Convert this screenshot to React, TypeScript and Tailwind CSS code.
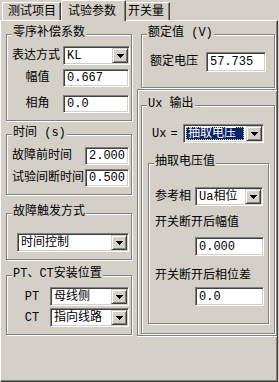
import type { ReactNode } from 'react';

const font = "font-['Liberation_Mono','Noto_Sans_CJK_SC',monospace]";

function Group({ title, className = '', children }: { title: string; className?: string; children?: ReactNode }) {
    return (
        <div className={`relative shrink-0 border border-[#808080] shadow-[inset_1px_1px_0_#fff,1px_1px_0_#fff] ${className}`}>
            <span className="absolute -top-[9px] left-[5px] bg-[#d4d0c8] px-[1px] leading-[14px] whitespace-nowrap">
                {title}
            </span>
            {children}
        </div>
    );
}

function Field({ value, className = '' }: { value: string; className?: string }) {
    return (
        <div className={`shrink-0 border border-t-[#808080] border-l-[#808080] border-b-white border-r-white bg-white shadow-[inset_1px_1px_0_#404040,inset_-1px_-1px_0_#d4d0c8] pl-[3px] flex items-center whitespace-nowrap ${className}`}>
            {value}
        </div>
    );
}

function Select({ value, className = '', focused = false }: { value: string; className?: string; focused?: boolean }) {
    return (
        <div className={`shrink-0 flex h-[19px] border border-t-[#808080] border-l-[#808080] border-b-white border-r-white bg-white shadow-[inset_1px_1px_0_#404040,inset_-1px_-1px_0_#d4d0c8] p-[1px] ${className}`}>
            <div className="flex-1 min-w-0 flex">
                {focused ? (
                    <div className="flex-1 m-[1px] mr-[2px] flex items-center bg-[#0a246a] text-white border border-dotted border-[#d8d080] pl-[1px] whitespace-nowrap">
                        {value}
                    </div>
                ) : (
                    <div className="flex-1 flex items-center pl-[2px] whitespace-nowrap">{value}</div>
                )}
            </div>
            <div className="w-[16px] h-full flex items-center justify-center bg-[#d4d0c8] border border-t-[#d4d0c8] border-l-[#d4d0c8] border-b-[#404040] border-r-[#404040] shadow-[inset_1px_1px_0_#fff,inset_-1px_-1px_0_#808080]">
                <svg width="7" height="4" viewBox="0 0 7 4" shapeRendering="crispEdges">
                    <path d="M0 0h7v1h-1v1h-1v1h-1v1h-1v-1h-1v-1h-1v-1h-1z" fill="#000" />
                </svg>
            </div>
        </div>
    );
}

export default function App() {
    return (
        <div className={`w-[279px] h-[382px] bg-[#d4d0c8] text-[12px] leading-[14px] text-black flex flex-col ${font}`}>
            {/* Tabs */}
            <div className="flex items-end h-[20px] pl-[2px] shrink-0">
                <div className="h-[18px] w-[59px] border-t border-l border-r border-t-white border-l-white border-r-[#404040] shadow-[inset_-1px_0_0_#808080] rounded-tl-[2px] pl-[5px] pt-[2px] whitespace-nowrap">
                    测试项目
                </div>
                <div className="relative z-10 -mb-[1px] h-[21px] w-[65px] bg-[#d4d0c8] border-t border-l border-r border-t-white border-l-white border-r-[#404040] shadow-[inset_-1px_0_0_#808080] rounded-tl-[2px] pl-[6px] pt-[4px] whitespace-nowrap">
                    试验参数
                </div>
                <div className="h-[18px] w-[44px] border-t border-r border-t-white border-r-[#404040] shadow-[inset_-1px_0_0_#808080] pl-[2px] pt-[2px] whitespace-nowrap">
                    开关量
                </div>
            </div>

            {/* Panel */}
            <div className="flex items-start w-[278px] h-[362px] border border-t-white border-l-white border-r-[#404040] border-b-[#404040] shadow-[inset_-1px_-1px_0_#808080]">
                {/* Left column */}
                <div className="ml-[5px] mt-[13px] w-[126px] flex flex-col">
                    <Group title="零序补偿系数" className="h-[87px] pt-[11px] pl-[5px]">
                        <div className="flex items-center">
                            <span className="w-[51px]">表达方式</span>
                            <Select value="KL" className="w-[67px]" />
                        </div>
                        <div className="mt-[4px] flex items-center">
                            <span className="w-[51px] text-center">幅值</span>
                            <Field value="0.667" className="w-[66px] h-[18px]" />
                        </div>
                        <div className="mt-[8px] flex items-center">
                            <span className="w-[51px] text-center">相角</span>
                            <Field value="0.0" className="w-[66px] h-[18px]" />
                        </div>
                    </Group>

                    <Group title="时间 (s)" className="mt-[13px] h-[61px] pt-[12px] pl-[5px]">
                        <div className="flex items-center">
                            <span className="w-[73px] whitespace-nowrap">故障前时间</span>
                            <Field value="2.000" className="w-[44px] h-[18px]" />
                        </div>
                        <div className="mt-[4px] flex items-center">
                            <span className="w-[73px] whitespace-nowrap">试验间断时间</span>
                            <Field value="0.500" className="w-[44px] h-[18px]" />
                        </div>
                    </Group>

                    <Group title="故障触发方式" className="mt-[18px] h-[47px] pt-[19px] pl-[10px]">
                        <Select value="时间控制" className="w-[112px]" />
                    </Group>

                    <Group title="PT、CT安装位置" className="mt-[15px] h-[60px] pt-[11px] pl-[13px]">
                        <div className="flex items-center">
                            <span className="w-[24px] text-center">PT</span>
                            <Select value="母线侧" className="ml-[6px] w-[79px]" />
                        </div>
                        <div className="mt-[2px] flex items-center">
                            <span className="w-[24px] text-center">CT</span>
                            <Select value="指向线路" className="ml-[6px] w-[79px]" />
                        </div>
                    </Group>
                </div>

                {/* Right column */}
                <div className="ml-[5px] w-[140px] flex flex-col">
                    <Group title="额定值 (V)" className="ml-[4px] mt-[13px] w-[134px] h-[54px] pt-[17px] pl-[8px]">
                        <div className="flex items-center">
                            <span className="w-[56px]">额定电压</span>
                            <Field value="57.735" className="w-[60px] h-[20px]" />
                        </div>
                    </Group>

                    <div className="mt-[1px] h-[247px] border-l border-t border-b border-[#808080] shadow-[inset_1px_1px_0_#fff,0_1px_0_#fff] flex flex-col">
                        <Group title="Ux 输出" className="ml-[3px] mt-[15px] w-[134px] h-[229px] pt-[18px]">
                            <div className="ml-[10px] flex items-center">
                                <span className="w-[31px] whitespace-nowrap">
                                    Ux<span className="ml-[4px]">=</span>
                                </span>
                                <Select value="抽取电压" focused className="w-[81px]" />
                            </div>
                            <Group title="抽取电压值" className="ml-[6px] mt-[20px] w-[121px] h-[161px] pt-[23px]">
                                <div className="ml-[6px] flex items-center">
                                    <span className="w-[40px]">参考相</span>
                                    <Select value="Ua相位" className="w-[68px]" />
                                </div>
                                <div className="ml-[6px] mt-[10px] whitespace-nowrap">开关断开后幅值</div>
                                <Field value="0.000" className="ml-[46px] mt-[7px] w-[69px] h-[19px]" />
                                <div className="ml-[6px] mt-[13px] whitespace-nowrap">开关断开后相位差</div>
                                <Field value="0.0" className="ml-[46px] mt-[4px] w-[69px] h-[19px]" />
                            </Group>
                        </Group>
                    </div>
                </div>
            </div>
        </div>
    );
}
